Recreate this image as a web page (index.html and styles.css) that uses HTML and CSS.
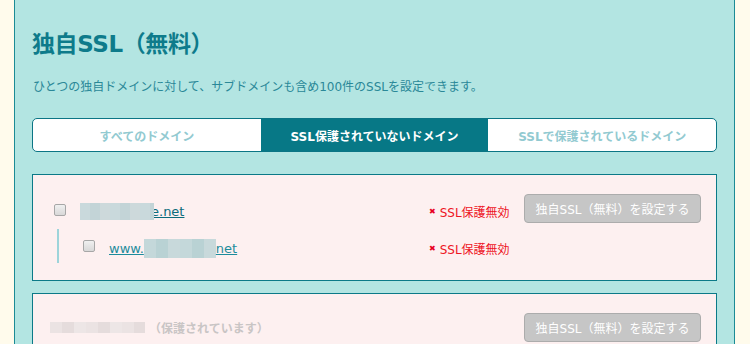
FILE: index.html
```html
<!DOCTYPE html>
<html lang="ja">
<head>
<meta charset="utf-8">
<title>独自SSL（無料）</title>
<link rel="stylesheet" href="styles.css">
</head>
<body>
<div class="panel">
  <h1 class="title">独自SSL（無料）</h1>
  <p class="desc">ひとつの独自ドメインに対して、サブドメインも含め100件のSSLを設定できます。</p>
  <div class="tabs">
    <div class="tab">すべてのドメイン</div>
    <div class="tab tab-active">SSL保護されていないドメイン</div>
    <div class="tab">SSLで保護されているドメイン</div>
  </div>

  <div class="card">
    <div class="row">
      <span class="check"></span>
      <a class="domain" href="#"><span class="blur blur-a"></span>e.net</a>
      <span class="status"><span class="x">✖</span>SSL保護無効</span>
      <span class="btn">独自SSL（無料）を設定する</span>
    </div>
    <div class="subrow">
      <span class="check"></span>
      <a class="domain sub" href="#">www.<span class="blur blur-b"></span>net</a>
      <span class="status"><span class="x">✖</span>SSL保護無効</span>
      <span class="btn-space"></span>
    </div>
  </div>

  <div class="card card-ok">
    <div class="row">
      <span class="protected"><span class="blur blur-c"></span>（保護されています）</span>
      <span class="btn">独自SSL（無料）を設定する</span>
    </div>
  </div>
</div>
</body>
</html>
```

FILE: styles.css
```css
html, body {
  margin: 0;
  padding: 0;
}
body {
  background: #fffbec;
  font-family: "DejaVu Sans", "Noto Sans CJK JP", sans-serif;
  height: 344px;
  overflow: hidden;
}
.panel {
  margin-left: 14px;
  width: 685px;
  background: #b3e5e2;
  border-left: 1px solid #1b8b95;
  border-right: 1px solid #1b8b95;
  padding: 29px 17px 20px 17px;
  min-height: 400px;
}
.title {
  margin: 0;
  font-size: 23px;
  line-height: 30px;
  height: 30px;
  font-weight: bold;
  color: #0e7b8b;
  letter-spacing: -0.4px;
}
.desc {
  margin: 19px 0 0 1px;
  font-size: 12px;
  line-height: 18px;
  color: #2a8898;
}
.tabs {
  margin-top: 22px;
  display: flex;
  border: 1px solid #0b7585;
  border-radius: 5px;
  overflow: hidden;
  background: #ffffff;
  height: 32px;
}
.tab {
  flex: 1;
  display: flex;
  align-items: center;
  justify-content: center;
  font-size: 12px;
  font-weight: bold;
  color: #92cad1;
}
.tab-active {
  background: #077886;
  color: #ffffff;
}
.card {
  margin-top: 22px;
  border: 1px solid #0b7a88;
  background: #fdf0f0;
  padding: 19px 15px 17px 21px;
}
.card + .card {
  margin-top: 12px;
}
.row {
  display: flex;
  align-items: center;
  height: 29px;
}
.check {
  width: 10px;
  height: 10px;
  border: 1px solid #a7a7a7;
  border-radius: 2px;
  background: linear-gradient(#f0f0f0, #d8d8d8);
  flex: none;
  margin-right: 14px;
}
.row .check {
  margin-top: 3px;
}
.domain {
  flex: 1;
  font-size: 13px;
  color: #0b6c7c;
  text-decoration: underline;
  display: flex;
  align-items: center;
  line-height: 17px;
}
.row .domain,
.row .status {
  margin-top: 5px;
}
.subrow .domain,
.subrow .status {
  margin-top: 4px;
}
.domain.sub {
  color: #1d8c9c;
}
.blur {
  display: inline-block;
  height: 17px;
  background: repeating-linear-gradient(90deg, #c9d9dc 0 10px, #c3d4d7 10px 20px, #cdd9db 20px 30px);
}
.blur-a {
  width: 74px;
  margin-right: -3px;
  position: relative;
  z-index: 1;
}
.blur-b {
  width: 72px;
  height: 19px;
  background: repeating-linear-gradient(90deg, #c4d8da 0 12px, #b9d2d4 12px 24px, #c8d9db 24px 36px);
}
.blur-c {
  width: 95px;
  height: 11px;
  margin-right: 4px;
  background: repeating-linear-gradient(90deg, #ebe3e3 0 12px, #e5dcdc 12px 24px, #ede6e6 24px 36px);
}
.status {
  width: 95px;
  flex: none;
  font-size: 12px;
  color: #ee1424;
  display: flex;
  align-items: center;
}
.x {
  font-size: 8px;
  font-weight: bold;
  margin-right: 4px;
  color: #e8001e;
}
.btn {
  flex: none;
  width: 175px;
  height: 27px;
  border: 1px solid #acacac;
  border-radius: 4px;
  background: #c6c6c6;
  color: #ffffff;
  font-size: 12px;
  display: flex;
  align-items: center;
  justify-content: center;
}
.btn-space {
  flex: none;
  width: 177px;
}
.subrow {
  display: flex;
  align-items: center;
  margin: 6px 0 0 3px;
  height: 34px;
  border-left: 2px solid #9dd4da;
  padding-left: 24px;
}
.card-ok .row {
  margin-left: -4px;
}
.protected {
  flex: 1;
  font-size: 12px;
  font-weight: bold;
  color: #c9c5c5;
  display: flex;
  align-items: center;
}
```
